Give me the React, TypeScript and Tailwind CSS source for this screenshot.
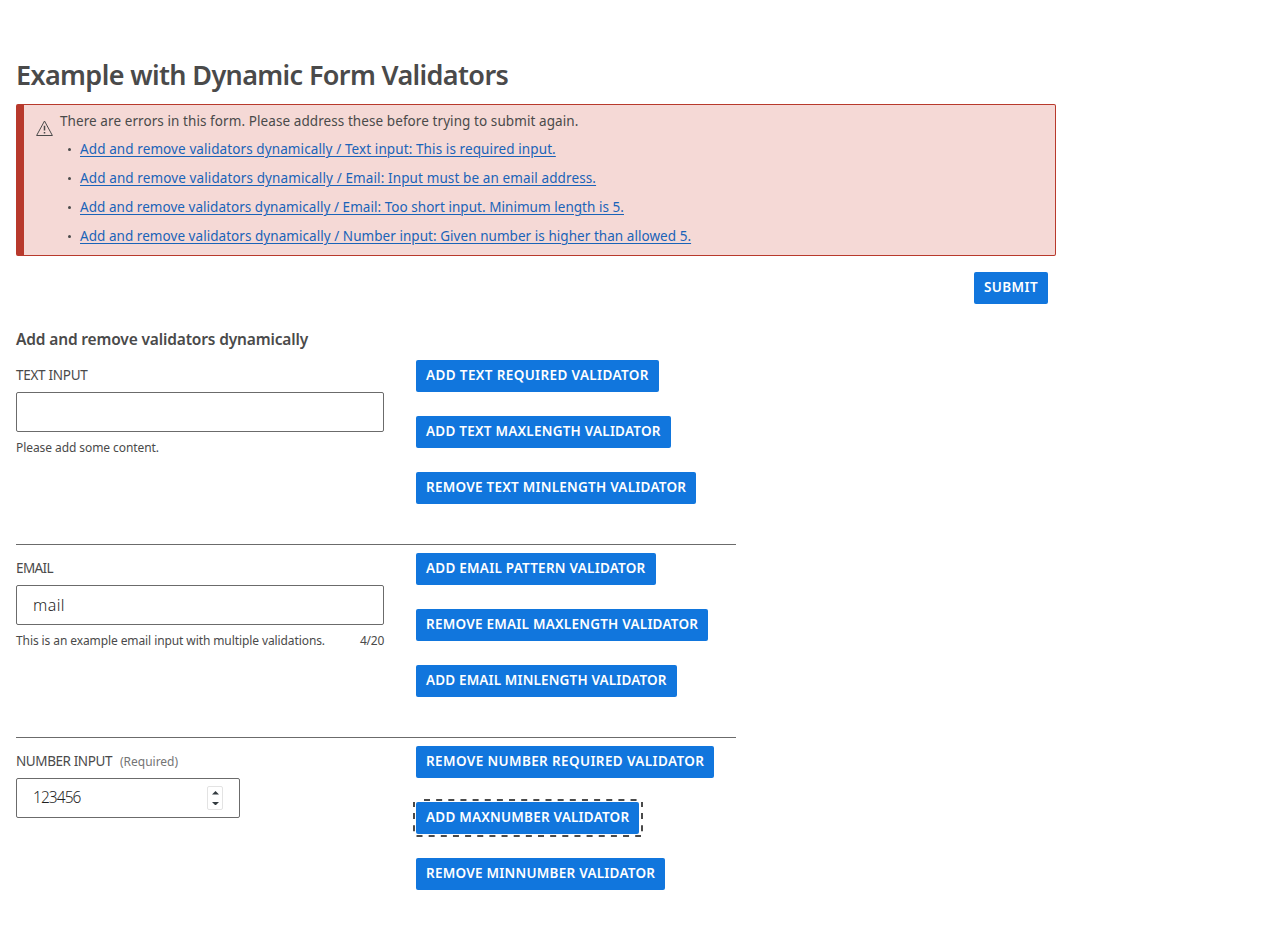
type Item = { text: string; track: string };

const errors: Item[] = [
  { text: "Add and remove validators dynamically / Text input: This is required input.", track: "tracking-[0.1px]" },
  { text: "Add and remove validators dynamically / Email: Input must be an email address.", track: "tracking-[0.113px]" },
  { text: "Add and remove validators dynamically / Email: Too short input. Minimum length is 5.", track: "tracking-[0.042px]" },
  { text: "Add and remove validators dynamically / Number input: Given number is higher than allowed 5.", track: "tracking-[0.048px]" },
];

const textButtons: Item[] = [
  { text: "Add text required validator", track: "tracking-[0.37px]" },
  { text: "Add text maxlength validator", track: "tracking-[0.23px]" },
  { text: "Remove text minlength validator", track: "tracking-[0.24px]" },
];

const emailButtons: Item[] = [
  { text: "Add email pattern validator", track: "tracking-[0.24px]" },
  { text: "Remove email maxlength validator", track: "tracking-[0.235px]" },
  { text: "Add email minlength validator", track: "tracking-[0.15px]" },
];

const numberButtons: Item[] = [
  { text: "Remove number required validator", track: "tracking-[0.378px]" },
  { text: "Add maxnumber validator", track: "tracking-[0.215px]" },
  { text: "Remove minnumber validator", track: "tracking-[0.245px]" },
];

function FocusRing() {
  return (
    <svg
      className="pointer-events-none absolute -top-[3px] -left-[3px]"
      width="230"
      height="38"
      viewBox="0 0 230 38"
      fill="none"
      stroke="#4a4a4a"
      strokeWidth="2"
      strokeDasharray="6 6.15"
    >
      <path d="M11 1H228" />
      <path d="M3.5 37H228" />
      <path d="M1 14V35" />
      <path d="M229 14V35" />
      <path d="M1 3V8M229 3V8" strokeDasharray="none" />
    </svg>
  );
}

function Button({ text, track, focused = false }: Item & { focused?: boolean }) {
  return (
    <button
      type="button"
      className={`relative h-8 rounded-xs bg-[#1176dd] px-2.5 pb-0.5 text-[13.5px] font-semibold whitespace-nowrap text-white uppercase outline-none ${track}`}
    >
      {text}
      {focused && <FocusRing />}
    </button>
  );
}

function ButtonColumn({ items, focused }: { items: Item[]; focused?: number }) {
  return (
    <div className="flex w-80 flex-col items-start gap-6">
      {items.map((item, i) => (
        <Button key={item.text} {...item} focused={i === focused} />
      ))}
    </div>
  );
}

const fieldClass =
  "block h-10 w-full appearance-none rounded-xs border border-[#6b6b6b] bg-white px-4 font-light text-[#1f1f1f] outline-none";

function WarningIcon() {
  return (
    <svg className="mt-[15px] h-4 w-[17px] shrink-0" viewBox="0 0 17 16" fill="none" stroke="#4a4a4a" strokeWidth="1">
      <path d="M8.5 1 16.4 15.5H.6Z" strokeLinejoin="round" />
      <path d="M8.5 5.8v4.6M8.5 12v1.4" strokeWidth="1.5" />
    </svg>
  );
}

export default function App() {
  return (
    <main className="h-[938px] overflow-hidden bg-white px-4 pt-14 font-['Noto_Sans',sans-serif] text-[#4a4a4a]">
      <h1 className="h-12 text-[27px] leading-[38px] font-semibold tracking-[-0.635px] text-[#4a4a4a]">
        Example with Dynamic Form Validators
      </h1>

      <section className="flex h-[152px] w-[1040px] rounded-xs border border-l-8 border-[#b8392c] bg-[#f5d9d6] pl-3">
        <WarningIcon />
        <div className="ml-[7px] text-[13.5px]">
          <p className="pt-1.5 leading-5 tracking-[0.08px]">
            There are errors in this form. Please address these before trying to submit again.
          </p>
          <ul className="mt-2 flex flex-col gap-[9px]">
            {errors.map((e) => (
              <li key={e.text} className="flex h-5 items-center pl-2 leading-5">
                <span className="mt-px size-[3px] rounded-full bg-[#4a4a4a]" />
                <a href="#" className={`ml-[9px] text-[#1a63b8] underline decoration-1 underline-offset-2 ${e.track}`}>
                  {e.text}
                </a>
              </li>
            ))}
          </ul>
        </div>
      </section>

      <div className="mt-4 flex w-[1032px] justify-end">
        <Button text="Submit" track="tracking-[0.4px]" />
      </div>

      <h2 className="mt-6 h-8 text-[15.5px] leading-[22px] font-semibold tracking-[-0.151px]">
        Add and remove validators dynamically
      </h2>

      <section className="flex h-[185px] w-[720px] justify-between border-b border-[#6b6b6b]">
        <div className="w-[368px] pt-1">
          <label className="block h-7 text-[13.5px] leading-[22px] tracking-[-0.285px]">TEXT INPUT</label>
          <input type="text" className={fieldClass} />
          <p className="mt-2 text-xs tracking-[-0.072px]">Please add some content.</p>
        </div>
        <ButtonColumn items={textButtons} />
      </section>

      <section className="flex h-[193px] w-[720px] justify-between border-b border-[#6b6b6b] pt-2">
        <div className="w-[368px] pt-1">
          <label className="block h-7 text-[13.5px] leading-[22px] tracking-[-0.6px]">EMAIL</label>
          <input type="text" defaultValue="mail" className={`${fieldClass} text-base tracking-[0.4px]`} />
          <div className="mt-2 flex justify-between text-xs">
            <span className="tracking-[-0.095px]">This is an example email input with multiple validations.</span>
            <span className="tracking-[-0.264px]">4/20</span>
          </div>
        </div>
        <ButtonColumn items={emailButtons} />
      </section>

      <section className="flex w-[720px] justify-between pt-2">
        <div className="w-[224px] pt-1">
          <label className="flex h-7 gap-2 text-[13.5px] leading-[22px]">
            <span className="tracking-[-0.41px]">NUMBER INPUT</span>
            <span className="text-xs leading-6 tracking-[-0.02px] text-[#757575]">(Required)</span>
          </label>
          <div className="flex h-10 items-center justify-between rounded-xs border border-[#6b6b6b] px-4">
            <input
              type="text"
              inputMode="numeric"
              defaultValue="123456"
              className="w-32 bg-transparent text-[15.5px] font-light tracking-[-0.93px] text-[#1f1f1f] outline-none"
            />
            <span className="flex h-6 w-4 flex-col items-center justify-between rounded-xs border border-[#e3e3e3] py-1">
              <svg className="h-[3.5px] w-[7px]" viewBox="0 0 7 3.5" fill="#333b40">
                <path d="M3.5 0 7 3.5H0Z" />
              </svg>
              <svg className="h-[3.5px] w-[7px]" viewBox="0 0 7 3.5" fill="#333b40">
                <path d="M0 0h7L3.5 3.5Z" />
              </svg>
            </span>
          </div>
        </div>
        <ButtonColumn items={numberButtons} focused={1} />
      </section>
    </main>
  );
}
